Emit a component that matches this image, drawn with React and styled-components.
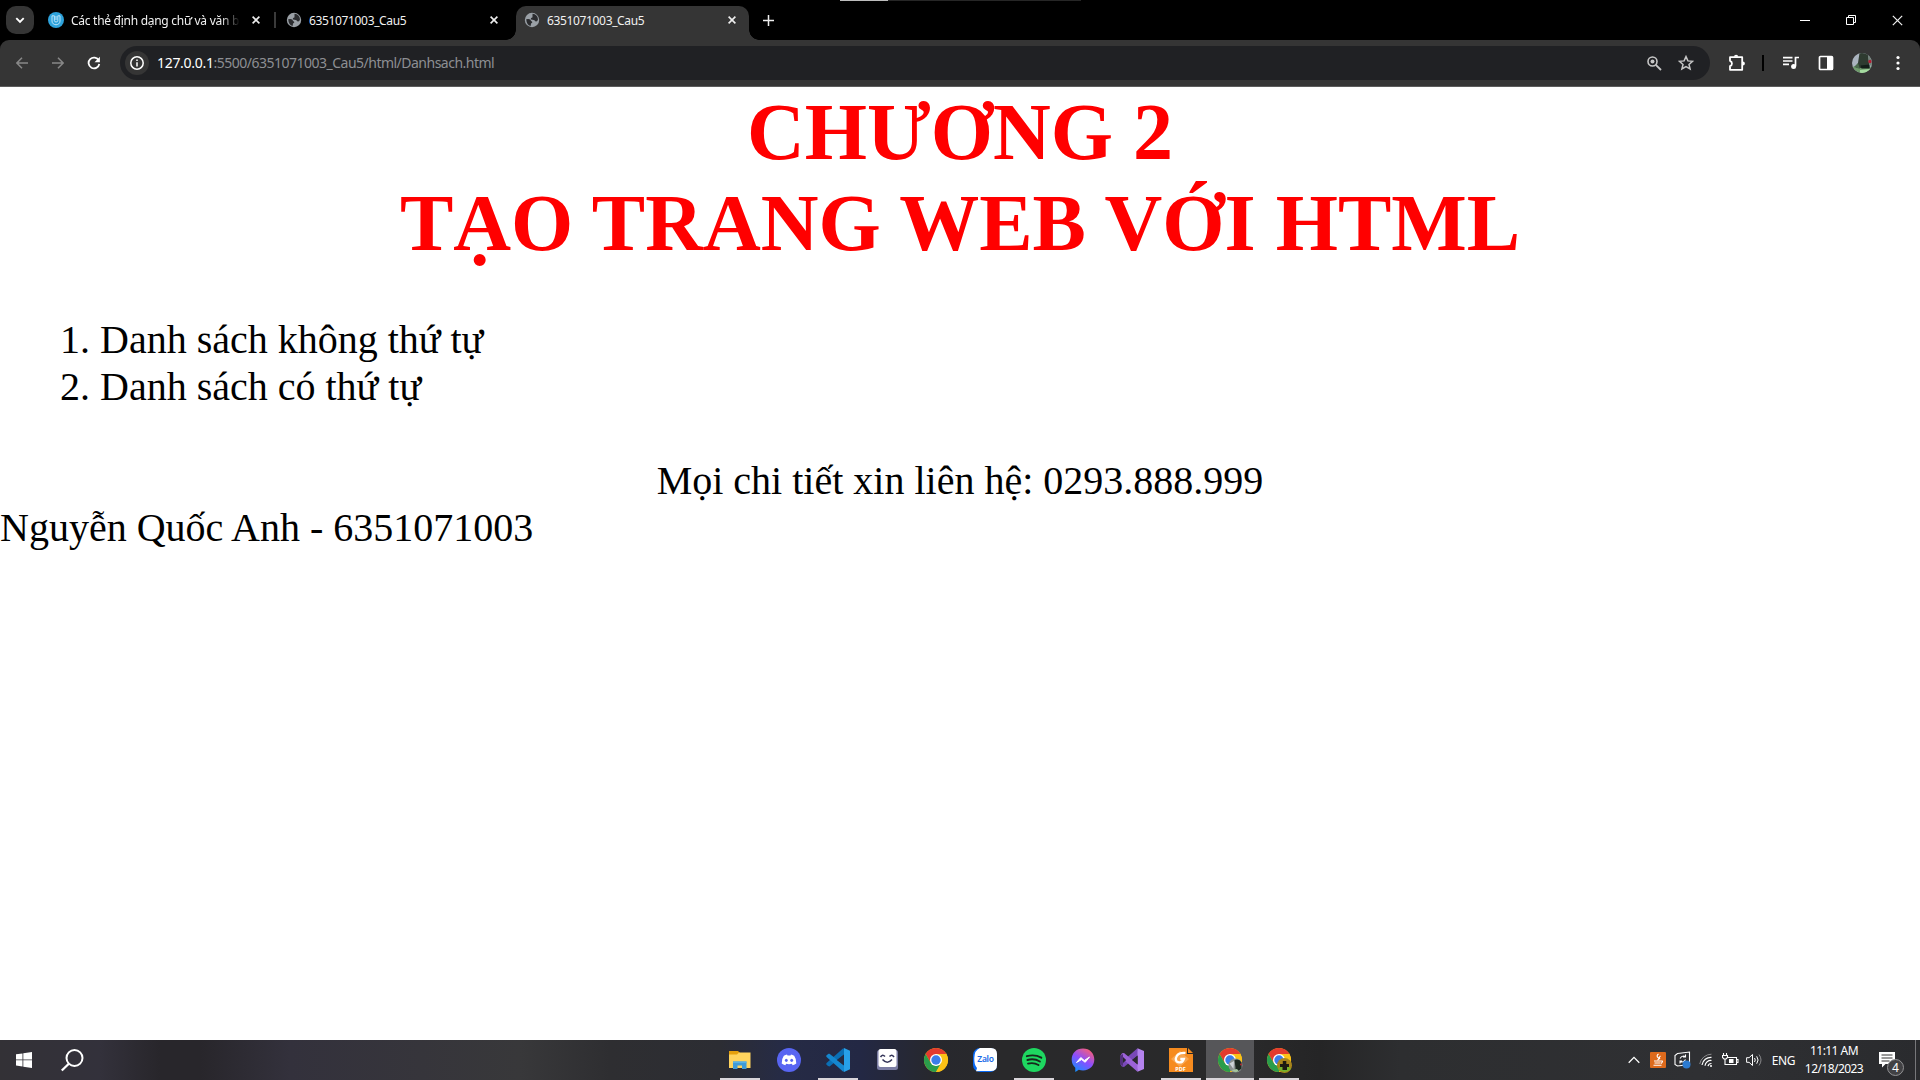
import React from "react";
import styled, { createGlobalStyle, css } from "styled-components";

const Global = createGlobalStyle`
  * { box-sizing: border-box; }
  html, body { margin: 0; padding: 0; background: #fff; overflow: hidden; }
  svg { display: block; flex: none; }
`;

const ui = css`font-family: "Noto Sans", "Open Sans", sans-serif;`;

const Screen = styled.div`
  width: 1920px; height: 1080px; display: flex; flex-direction: column; overflow: hidden;
`;
const TabStrip = styled.header`
  ${ui}
  height: 40px; background: #000; display: flex; align-items: center; padding: 0 0 0 6px;
  position: relative; flex: none;
`;
const TabSearch = styled.button`
  width: 28px; height: 28px; border: 0; border-radius: 10px; background: #353535; padding: 0;
  display: grid; place-items: center; margin-right: 6px;
`;
const TabBox = styled.div`
  position: relative; width: ${(p) => p.$w}px; height: 34px; align-self: flex-end;
  display: flex; align-items: center; padding: 0 10px 6px 8px; color: #f1f1f1;
  ${(p) => p.$active && css`
    background: #353535; border-radius: 10px 10px 0 0;
    &::before, &::after {
      content: ""; position: absolute; bottom: 0; width: 10px; height: 10px;
    }
    &::before { left: -10px; background: radial-gradient(circle at 0 0, transparent 9.5px, #353535 10px); }
    &::after { right: -10px; background: radial-gradient(circle at 100% 0, transparent 9.5px, #353535 10px); }
  `}
`;
const TabTitle = styled.span`
  flex: none; width: 170px; margin-left: 7px; padding-top: 1px; font-size: 12px; line-height: 18px; white-space: nowrap;
  letter-spacing: -0.35px;
  ${(p) => p.$fade && css`letter-spacing: -0.28px; mask-image: linear-gradient(90deg, #000 150px, transparent 169px);`}
`;
const TabClose = styled.span`
  display: grid; place-items: center; width: 14px; margin-left: 8px;
`;
const TabDivider = styled.i`
  width: 2px; height: 16px; background: #3a3a3a; margin: 0 2px 0 1px;
`;
const NewTab = styled.span`
  width: 28px; height: 28px; display: grid; place-items: center; margin-left: 5px;
`;
const DragBar = styled.i`
  position: absolute; top: 0; left: 840px; width: 241px; height: 1px;
  background: linear-gradient(90deg, #bdbdbd 48px, #262626 48px);
`;
const WindowButtons = styled.div`
  margin-left: auto; display: flex; height: 40px;
  span { width: 46px; display: grid; place-items: center; }
`;
const ToolbarBack = styled.div` background: #000; flex: none; `;
const Toolbar = styled.div`
  ${ui}
  height: 47px; background: #353535; border-radius: 9px 9px 0 0; display: flex; align-items: center;
  border-bottom: 1px solid #5c5c5c; padding: 0 0 0 4px;
`;
const ToolButton = styled.span`
  width: ${(p) => p.$w || 36}px; height: 34px; display: grid; place-items: center; flex: none;
`;
const Omnibox = styled.div`
  width: 1590px; height: 34px; margin: 0 10px 0 8px; border-radius: 17px; background: #202124; display: flex; align-items: center;
  padding: 0 8px 0 5px; flex: none;
`;
const SiteInfo = styled.span`
  width: 24px; height: 24px; border-radius: 50%; background: #353535; display: grid; place-items: center;
`;
const Url = styled.span`
  flex: 1; margin-left: 8px; font-size: 14px; line-height: 22px; color: #8d8f93; letter-spacing: -0.51px; white-space: nowrap;
  b { font-weight: 400; color: #fff; letter-spacing: -0.3px; }
`;
const ToolDivider = styled.i`
  width: 2px; height: 16px; background: #000; margin: 0 9px 0 8px; flex: none;
`;

const Page = styled.main`
  flex: 1; background: #fff; color: #000; font-family: "Liberation Serif", "Times New Roman", serif;
  font-size: 40px; line-height: 47px; white-space: nowrap;
`;
const Heading = styled.h1`
  margin: 0 0 47px; font-size: 80px; line-height: 91px; font-weight: 700; color: #f00; text-align: center;
`;
const List = styled.ol` margin: 0 0 47px; padding: 0 0 0 100px; `;
const Contact = styled.div` text-align: center; `;
const Author = styled.div``;

const Taskbar = styled.footer`
  ${ui}
  height: 40px; flex: none; display: flex; align-items: center; color: #fff;
  background: linear-gradient(90deg, #333136 0, #33313b 100px, #28262b 160px, #28262b 200px, #33313c 290px, #36353b 420px, #38383a 520px, #2e2e31 610px, #2c2d33 720px, #262b45 780px, #232844 860px, #27282e 930px, #29292b 1000px, #29292a 1250px, #252526 1320px, #2d2e30 1400px, #2f3033 1700px, #2a2b2e 1920px);
`;
const TaskStart = styled.div` width: 716px; display: flex; padding-left: 16px; align-items: center; gap: 28px; `;
const TaskApps = styled.div` display: flex; gap: 1px; height: 40px; `;
const TaskApp = styled.div`
  width: 48px; height: 40px; display: grid; place-items: center;
  ${(p) => p.$open && css`background: linear-gradient(#d9d5da, #d9d5da) center bottom / 40px 2px no-repeat;`}
  ${(p) => p.$active && css`background: linear-gradient(#d9d5da, #d9d5da) center bottom / 48px 2px no-repeat, #565659;`}
`;
const Tray = styled.div` margin-left: auto; display: flex; align-items: center; height: 40px; `;
const TrayCell = styled.span` width: 24px; display: grid; place-items: center; `;
const Lang = styled.span` width: 35px; text-align: center; font-size: 12px; letter-spacing: -0.3px; `;
const Clock = styled.div`
  width: 64px; text-align: center; font-size: 12px; line-height: 18px; white-space: nowrap; margin: 0 12px 0 1px;
  letter-spacing: -0.55px;
`;
const Notice = styled.div` position: relative; width: 32px; height: 24px; padding-top: 3px; `;
const Badge = styled.span`
  position: absolute; left: 9px; top: 11px; width: 17px; height: 17px; border-radius: 50%; background: #414144;
  border: 1px solid #929294; font-size: 12px; line-height: 15px; text-align: center;
`;
const ShowDesktop = styled.i` width: 5px; height: 40px; border-left: 1px solid #77777a; margin-left: 5px; `;

const Cross = ({ size = 8, w = 1.6 }) => (
  <svg width={size} height={size} viewBox="0 0 8 8"><path d="M.6.6l6.8 6.8M7.4.6L.6 7.4" stroke="#eee" strokeWidth={w} /></svg>
);
const Globe = () => (
  <svg width="16" height="16" viewBox="0 0 16 16">
    <circle cx="8" cy="8" r="7.200" fill="#9aa0a6" />
    <path d="M2.200 7.200q3-.6 4 .4t.6 1.400q1.700 0 1.500 1.600-1.600.4-1.700 3.400Q2.600 13 2.200 7.200z" fill="#2b2c2f" />
    <path d="M8.500 1.800q5 .4 5.500 5.700-.8 2.600-2.600 1.800Q10.600 7.500 8 7.800q-1.800-.4-1-1.900 2-.2 1.500-1.500z" fill="#2b2c2f" />
  </svg>
);
const Favicon = () => (
  <svg width="16" height="16" viewBox="0 0 16 16">
    <circle cx="8" cy="8" r="8" fill="#2ea3dc" />
    <path d="M4 3.800v5.200c0 5 8 5 8 0V3.800H9.800v5c0 1.600-3.400 1.600-3.400 0v-5zM8 4v4" fill="none" stroke="#c9eafa" strokeWidth=".9" />
  </svg>
);

function Tab({ title, icon, active, w, fade }) {
  return (
    <TabBox $active={active} $w={w}>
      {icon}
      <TabTitle $fade={fade}>{title}</TabTitle>
      <TabClose><Cross /></TabClose>
    </TabBox>
  );
}

const ChromeLogo = ({ children }) => (
  <svg width="26" height="26" viewBox="-1 -1 26 26">
    <circle cx="12" cy="12" r="12" fill="#fbc116" />
    <path d="M12 6h10.400A12 12 0 0 0 1.600 6l5.200 9z" fill="#e33b2e" />
    <path d="M1.600 6A12 12 0 0 0 12 24l5.200-9-5.200 3-5.200-3z" fill="#2a9d4b" />
    <path d="M12 6h10.400A12 12 0 0 1 12 24l5.200-9z" fill="#fbc116" />
    <circle cx="12" cy="12" r="6" fill="#fff" />
    <circle cx="12" cy="12" r="4.700" fill="#3b7de9" />
    {children}
  </svg>
);
const Folder = () => (
  <svg width="24" height="24" viewBox="0 0 24 24">
    <path d="M1 3h9l2 2v3H1z" fill="#e5a00d" /><path d="M1 6.500h8L11 4.500h11.500V20H1z" fill="#ffd45e" />
    <path d="M5 21v-7.500h13.500V21H14v-3.500H9.500V21z" fill="#3f9bd8" /><path d="M5 13.500h13.500V15H5z" fill="#56b1e8" />
  </svg>
);
const Discord = () => (
  <svg width="24" height="24" viewBox="0 0 24 24">
    <circle cx="12" cy="12" r="12" fill="#5865f2" />
    <path d="M6.800 7.700Q8.500 6.800 10 6.600l.5.9h3l.5-.9q1.600.2 3.200 1.100Q19.500 11 19.300 15.500q-1.600 1.300-3.600 1.700l-.9-1.400q-2.800.7-5.600 0l-.9 1.400q-2-.4-3.600-1.700Q4.500 11 6.800 7.700z" fill="#fff" />
    <ellipse cx="9.300" cy="12.300" rx="1.400" ry="1.600" fill="#5865f2" /><ellipse cx="14.700" cy="12.300" rx="1.400" ry="1.600" fill="#5865f2" />
  </svg>
);
const VsCode = () => (
  <svg width="24" height="24" viewBox="0 0 24 24">
    <path d="M17.500 0L19 6 3.500 18.500 2 18 .3 16.400v-1.100z" fill="#0a6fb5" />
    <path d="M.3 7.600L2.500 5.700h1L19 18l-1.500 6L.3 8.700z" fill="#1587cf" />
    <path d="M18 0v24l6-2.800V2.800z" fill="#27a0e8" />
    <path d="M17.900 6.600v10.800L10.800 12z" fill="#252b40" />
  </svg>
);
const Robot = () => (
  <svg width="24" height="24" viewBox="0 0 24 24">
    <rect x="2" y="2" width="21" height="20" rx="2.500" fill="#7a7ca3" /><rect x="3.500" y="1" width="18" height="18" rx="2" fill="#fff" />
    <path d="M5.500 9q2-3.400 4.500-.5M14.500 8.500q2.500-2.900 4.500.5M7.500 11.500q4.800 5.500 9.500 0" fill="none" stroke="#35365a" strokeWidth="1.500" />
  </svg>
);
const ZaloText = styled.text` font: 600 8.500px "Noto Sans", sans-serif; letter-spacing: -0.300px; `;
const Zalo = () => (
  <svg width="24" height="24" viewBox="0 0 24 24">
    <rect width="24" height="24" rx="7" fill="#0868f4" /><path d="M7 0h11q6 0 6 6v11q0 6-6 6H8l-5 .3 1-3.300Q1 17 1.300 10 1.500 2 7 0z" fill="#fff" />
    <ZaloText x="4.300" y="13.800" fill="#1769e8">Zalo</ZaloText>
  </svg>
);
const Spotify = () => (
  <svg width="24" height="24" viewBox="0 0 24 24">
    <circle cx="12" cy="12" r="12" fill="#1ed760" />
    <path d="M4.800 8.200q8-2.200 14.500 1.500M5.400 12q6.800-1.900 12.500 1.500M6 15.600q5.700-1.500 10.500 1.400" fill="none" stroke="#17271c" strokeWidth="1.900" strokeLinecap="round" />
  </svg>
);
const Messenger = () => (
  <svg width="24" height="24" viewBox="0 0 24 24">
    <defs><linearGradient id="msg" x1=".2" y1="1" x2=".8" y2="0"><stop offset="0" stopColor="#1292ff" /><stop offset=".5" stopColor="#8a4dff" /><stop offset="1" stopColor="#ff5f70" /></linearGradient></defs>
    <path d="M12 .5C5.200.5.700 5.300.700 11.500c0 3.500 1.300 6.200 3.600 8.200V24l3.500-2.200q2 .6 4.200.6c6.800 0 11.300-4.700 11.300-10.900S18.800.5 12 .5z" fill="url(#msg)" />
    <path d="M5.500 14.500L9.800 9.500l3.500 3L18.500 9l-4.300 5.300-3.600-2.700z" fill="#fff" stroke="#fff" />
  </svg>
);
const VisualStudio = () => (
  <svg width="24" height="24" viewBox="0 0 24 24">
    <path d="M17.500.3L0 15.500l1.800 3L4 19 18.500 7z" fill="#7948b8" /><path d="M0 8.500L2 5.200 4 5l14.500 12-1 6.700z" fill="#9b62d8" />
    <path d="M0 8v8l3 2V6z" fill="#52307c" /><path d="M17.500.3L24 3v18l-6.500 2.700z" fill="#b583ef" /><path d="M17.600 7.500v9L12 12zM3 9v6l3.200-3z" fill="#29282e" />
  </svg>
);
const FoxitText = styled.text` font: 700 5.500px "Noto Sans", sans-serif; `;
const Foxit = () => (
  <svg width="24" height="24" viewBox="0 0 24 24">
    <path d="M0 0h18v6h6v18H0z" fill="#f68b1f" /><path d="M19 0l5 5h-5z" fill="#f68b1f" /><path d="M11 3l9 8-9 8-9-8z" fill="#f9a651" />
    <path d="M16.500 5Q8 4 6.800 10.500c-.5 4.500 6.200 5.700 8 .5h-3.500" fill="none" stroke="#fff" strokeWidth="2.300" />
    <FoxitText x="6.300" y="22.500" fill="#fff">PDF</FoxitText>
  </svg>
);
const Avatar = () => (
  <svg width="20" height="20" viewBox="0 0 20 20">
    <defs><clipPath id="av"><circle cx="10" cy="10" r="10" /></clipPath></defs>
    <g clipPath="url(#av)">
      <path d="M0 0h20v20H0z" fill="#aab3be" />
      <path d="M0 14q8-3 20 0v6H0z" fill="#6f9b6b" />
      <path d="M7.500 0h8.500l1.500 15H4l2-5z" fill="#2e3b30" />
      <path d="M8.500 12.500l9-1v4h-8z" fill="#131d18" />
      <path d="M8 17l10-1v4H8z" fill="#a5dba0" />
      <path d="M16 0h4v14l-3-3z" fill="#75857b" />
      <circle cx="18" cy="8.500" r="1.700" fill="#b51f35" />
      <path d="M2 14l4-4 2 6z" fill="#4b6a4c" />
    </g>
  </svg>
);

const apps = [
  { icon: <Folder />, open: true }, { icon: <Discord /> }, { icon: <VsCode />, open: true }, { icon: <Robot /> },
  { icon: <ChromeLogo /> }, { icon: <Zalo /> }, { icon: <Spotify />, open: true }, { icon: <Messenger /> },
  { icon: <VisualStudio /> }, { icon: <Foxit />, open: true },
  { icon: <ChromeLogo><circle cx="17.500" cy="17.500" r="7" fill="#89918f" /><path d="M16.500 12q5-1.500 7 2.500v6l-4 3.300q-2.500-1-2-4z" fill="#1d2920" /><path d="M11.500 15.500l4.500-2.500-.5 8z" fill="#cfd5d8" /><path d="M13.500 22q3 3 7.500 1.300l-2-2.300z" fill="#a5c59f" /><circle cx="23" cy="16.500" r="1" fill="#b42a36" /></ChromeLogo>, active: true },
  { icon: <ChromeLogo><circle cx="17.500" cy="17.500" r="7.500" fill="#a8851b" /><path d="M11 21q6.500 6 13 0l-2-2H13z" fill="#73b32b" /><path d="M15.800 13h3.500v3h2.700v3h-2v3h-4.500v-3H13v-3h2.800z" fill="#1c1a12" /></ChromeLogo>, open: true },
];

export default function App() {
  return (
    <Screen>
      <Global />
      <TabStrip>
        <TabSearch><svg width="10" height="7" viewBox="0 0 10 7"><path d="M1.300 1.200L5 4.900l3.700-3.700" fill="none" stroke="#fff" strokeWidth="1.900" /></svg></TabSearch>
        <Tab w={233} icon={<Favicon />} title="Các thẻ định dạng chữ và văn b" fade />
        <TabDivider />
        <Tab w={238} icon={<Globe />} title="6351071003_Cau5" />
        <Tab w={233} icon={<Globe />} title="6351071003_Cau5" active />
        <NewTab><svg width="11" height="11" viewBox="0 0 11 11"><path d="M5.500 0v11M0 5.500h11" stroke="#eee" strokeWidth="1.500" /></svg></NewTab>
        <DragBar />
        <WindowButtons>
          <span><svg width="10" height="10" viewBox="0 0 10 10"><path d="M0 5.500h10" stroke="#fff" /></svg></span>
          <span><svg width="10" height="10" viewBox="0 0 10 10"><path d="M.5 2.500h7v7h-7zM2.500 2.500v-2h7v7h-2" fill="none" stroke="#fff" /></svg></span>
          <span><Cross size={11} w={0.9} /></span>
        </WindowButtons>
      </TabStrip>
      <ToolbarBack>
        <Toolbar>
          <ToolButton><svg width="12" height="12" viewBox="0 0 12 12"><path d="M6 .7L.9 6 6 11.300M1 6h11" fill="none" stroke="#888" strokeWidth="1.500" /></svg></ToolButton>
          <ToolButton><svg width="12" height="12" viewBox="0 0 12 12"><path d="M6 .7L11.100 6 6 11.300M11 6H0" fill="none" stroke="#888" strokeWidth="1.500" /></svg></ToolButton>
          <ToolButton><svg width="14" height="14" viewBox="0 0 14 14"><path d="M11.800 4.500A5.400 5.400 0 1 0 12.300 8" fill="none" stroke="#fff" strokeWidth="1.800" /><path d="M12.900.8v5.400H7.500z" fill="#fff" /></svg></ToolButton>
          <Omnibox>
            <SiteInfo><svg width="14" height="14" viewBox="0 0 14 14"><circle cx="7" cy="7" r="6.200" fill="none" stroke="#fff" strokeWidth="1.500" /><path d="M7 6.200v4.200M7 3.500v1.500" stroke="#fff" strokeWidth="1.500" /></svg></SiteInfo>
            <Url><b>127.0.0.1</b>:5500/6351071003_Cau5/html/Danhsach.html</Url>
            <ToolButton $w={32}><svg width="15" height="15" viewBox="0 0 15 15"><circle cx="5.500" cy="5.500" r="4.500" fill="none" stroke="#c7c7c7" strokeWidth="1.600" /><circle cx="5.500" cy="5.500" r="2" fill="#c7c7c7" /><path d="M8.800 8.800L14 14" stroke="#c7c7c7" strokeWidth="1.800" /></svg></ToolButton>
            <ToolButton $w={32}><svg width="16" height="16" viewBox="0 0 16 16"><path d="M8 1.600l1.900 4.300 4.700.4-3.600 3.100 1.100 4.600L8 11.600 3.900 14 5 9.400 1.400 6.300l4.700-.4z" fill="none" stroke="#c7c7c7" strokeWidth="1.500" /></svg></ToolButton>
          </Omnibox>
          <ToolButton $w={34}><svg width="18" height="18" viewBox="0 0 18 18"><path d="M2 3.200h12.200v12.600H2v-3.600c2.600-1 2.600-4.400 0-5.400z" fill="none" stroke="#fff" strokeWidth="1.800" strokeLinejoin="round" /><path d="M6 2.800a2.100 2.100 0 0 1 4.200 0zM14.800 7.400a2.100 2.100 0 0 1 0 4.200z" fill="#fff" /></svg></ToolButton>
          <ToolDivider />
          <ToolButton><svg width="16" height="14" viewBox="0 0 16 14"><path d="M0 1.700h9.500M0 5h9.500M0 8.300h6M16 1.500h-3.500v8.700" fill="none" stroke="#fff" strokeWidth="1.700" /><circle cx="10.600" cy="10.500" r="2.500" fill="#fff" /></svg></ToolButton>
          <ToolButton $w={34}><svg width="16" height="16" viewBox="0 0 16 16"><rect x="1.500" y="1.500" width="13" height="13" rx="1" fill="none" stroke="#fff" strokeWidth="1.700" /><path d="M9 1.500h5.500v13H9z" fill="#fff" /></svg></ToolButton>
          <ToolButton $w={38}><Avatar /></ToolButton>
          <ToolButton $w={34}><svg width="4" height="16" viewBox="0 0 4 16" fill="#fff"><circle cx="2" cy="2.500" r="1.600" /><circle cx="2" cy="8" r="1.600" /><circle cx="2" cy="13.500" r="1.600" /></svg></ToolButton>
        </Toolbar>
      </ToolbarBack>
      <Page>
        <Heading>CHƯƠNG 2<br />TẠO TRANG WEB VỚI HTML</Heading>
        <List><li>Danh sách không thứ tự</li><li>Danh sách có thứ tự</li></List>
        <Contact>Mọi chi tiết xin liên hệ: 0293.888.999</Contact>
        <Author>Nguyễn Quốc Anh - 6351071003</Author>
      </Page>
      <Taskbar>
        <TaskStart>
          <svg width="16" height="16" viewBox="0 0 16 16" fill="#fff"><path d="M0 2.300l6.500-.9v6.100H0zM7.300 1.300L16 0v7.500H7.300zM0 8.300h6.500v6.200L0 13.600zM7.300 8.300H16V16l-8.700-1.300z" /></svg>
          <svg width="24" height="24" viewBox="0 0 24 24" fill="none" stroke="#fff" strokeWidth="2"><circle cx="14.500" cy="10" r="8" /><path d="M8.800 15.700L1.800 22.500" strokeWidth="2.300" /></svg>
        </TaskStart>
        <TaskApps>{apps.map((a, i) => <TaskApp key={i} $open={a.open} $active={a.active}>{a.icon}</TaskApp>)}</TaskApps>
        <Tray>
          <TrayCell><svg width="12" height="8" viewBox="0 0 12 8"><path d="M.7 6.700L6 1.400l5.300 5.300" fill="none" stroke="#fff" strokeWidth="1.300" /></svg></TrayCell>
          <TrayCell><svg width="16" height="16" viewBox="0 0 16 16"><rect width="16" height="16" rx="1" fill="#dd6a1c" /><path d="M8.500 2Q6 4 8 5.500T7.500 8M10.500 4Q8.500 5.500 10 7M4 9h7q3-.5 0 2.500M4.500 11h6M3.500 13.300h8" fill="none" stroke="#fff" strokeWidth="1.100" /></svg></TrayCell>
          <TrayCell><svg width="17" height="18" viewBox="0 0 17 18"><path d="M3.500 2.500L15.500 1v12.500L3.500 15 1 13.500v-9z" fill="none" stroke="#fff" strokeWidth="1.100" /><path d="M6 7.500Q8 4 11.500 5.500M11.500 3.500v2.500H9M11.500 8.500Q10 12 6 10.500M6 12.500V10h2" fill="none" stroke="#fff" strokeWidth="1.100" /><circle cx="12.500" cy="13.500" r="4" fill="#2d7bd0" /></svg></TrayCell>
          <TrayCell><svg width="14" height="14" viewBox="0 0 14 14" fill="none" stroke="#fff"><path d="M.7 11A12 12 0 0 1 12.500 1.200" stroke="#8a8a8c" /><path d="M3 12A9 9 0 0 1 12.500 4.300M6 12.800A6 6 0 0 1 12.500 7.500M9 13.200A3.500 3.500 0 0 1 12.500 10.500" strokeWidth="1.200" /><circle cx="12" cy="13" r="1" fill="#fff" stroke="none" /></svg></TrayCell>
          <TrayCell><svg width="17" height="14" viewBox="0 0 17 14" fill="none" stroke="#fff"><path d="M6 4.500h8.500v7h-8M14.500 6.500h1.500v3h-1.500M1.500 0v2.500M4.500 0v2.500M.5 2.500h5v2L4 6H2L.5 4.500zM3 6v5.500h3.500" strokeWidth="1.100" /><path d="M7 6h4.500v4H7z" fill="#fff" stroke="none" /></svg></TrayCell>
          <TrayCell><svg width="17" height="14" viewBox="0 0 17 14" fill="none" stroke="#fff"><path d="M.6 4.700h2.500L6.500 1.500v11L3.100 9.300H.6z" /><path d="M8.500 5q1.500 2 0 4M10.700 3.300q2.800 3.700 0 7.400" /><path d="M13 1.500q4 5.500 0 11" stroke="#8a8a8c" /></svg></TrayCell>
          <Lang>ENG</Lang>
          <Clock>11:11 AM<br />12/18/2023</Clock>
          <Notice>
            <svg width="18" height="18" viewBox="0 0 18 18"><path d="M1 1h16v12H7.500L4 16.500V13H1z" fill="#fff" /><path d="M3.500 4h11M3.500 7h11M3.500 10h8" stroke="#333" /></svg>
            <Badge>4</Badge>
          </Notice>
          <ShowDesktop />
        </Tray>
      </Taskbar>
    </Screen>
  );
}
